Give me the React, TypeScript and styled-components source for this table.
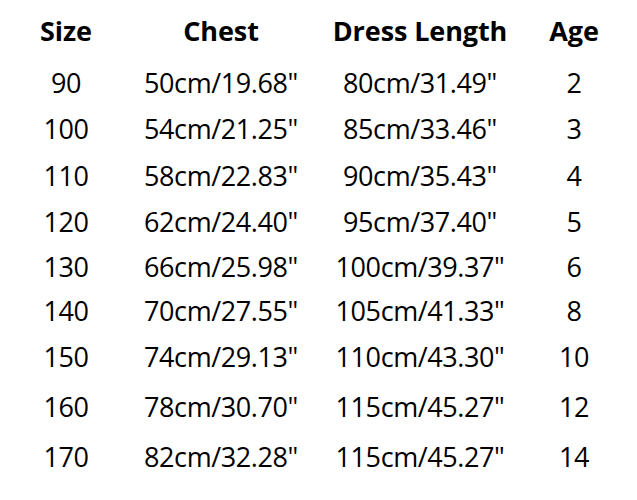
import React from 'react';
import styled, { createGlobalStyle } from 'styled-components';

const GlobalStyle = createGlobalStyle`
  html, body {
    margin: 0;
    padding: 0;
    background: #ffffff;
  }
  body {
    font-family: 'Open Sans', 'Noto Sans', 'DejaVu Sans', sans-serif;
    color: #000000;
  }
`;

const Chart = styled.div`
  width: 637px;
  height: 500px;
  padding-top: 11px;
  box-sizing: border-box;
  background: #ffffff;
`;

const Row = styled.div<{ space: number }>`
  display: grid;
  grid-template-columns: 132px 178px 220px 88px;
  height: 40px;
  margin-top: ${props => props.space}px;
  align-items: center;
`;

const HeadCell = styled.div`
  text-align: center;
  font-size: 27px;
  font-weight: 700;
  line-height: 40px;
  letter-spacing: -0.1px;
  white-space: nowrap;
`;

const Cell = styled.div`
  text-align: center;
  font-size: 27px;
  font-weight: 400;
  line-height: 40px;
  letter-spacing: -0.4px;
  white-space: nowrap;
`;

const headers = ['Size', 'Chest', 'Dress Length', 'Age'];

const rows = [
  { size: '90', chest: '50cm/19.68"', length: '80cm/31.49"', age: '2', space: 11.5 },
  { size: '100', chest: '54cm/21.25"', length: '85cm/33.46"', age: '3', space: 6.5 },
  { size: '110', chest: '58cm/22.83"', length: '90cm/35.43"', age: '4', space: 7 },
  { size: '120', chest: '62cm/24.40"', length: '95cm/37.40"', age: '5', space: 6 },
  { size: '130', chest: '66cm/25.98"', length: '100cm/39.37"', age: '6', space: 5 },
  { size: '140', chest: '70cm/27.55"', length: '105cm/41.33"', age: '8', space: 4 },
  { size: '150', chest: '74cm/29.13"', length: '110cm/43.30"', age: '10', space: 6 },
  { size: '160', chest: '78cm/30.70"', length: '115cm/45.27"', age: '12', space: 10 },
  { size: '170', chest: '82cm/32.28"', length: '115cm/45.27"', age: '14', space: 10 },
];

const App: React.FC = () => {
  return (
    <>
      <GlobalStyle />
      <Chart>
        <Row space={0}>
          {headers.map(h => (
            <HeadCell key={h}>{h}</HeadCell>
          ))}
        </Row>
        {rows.map(r => (
          <Row key={r.size} space={r.space}>
            <Cell>{r.size}</Cell>
            <Cell>{r.chest}</Cell>
            <Cell>{r.length}</Cell>
            <Cell>{r.age}</Cell>
          </Row>
        ))}
      </Chart>
    </>
  );
};

export default App;
